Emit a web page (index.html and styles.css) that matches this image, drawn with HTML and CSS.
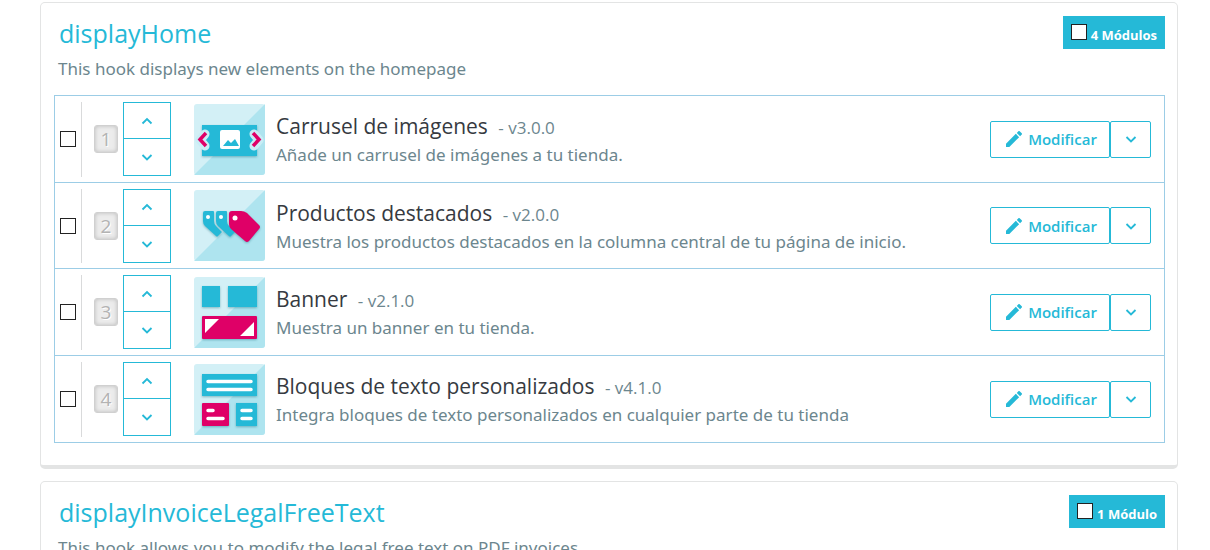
FILE: index.html
```html
<!DOCTYPE html>
<html lang="es">
<head>
<meta charset="utf-8">
<title>Posiciones de los módulos</title>
<link rel="stylesheet" href="styles.css">
</head>
<body>
<svg class="defs" aria-hidden="true">
  <symbol id="up" viewBox="0 0 12 12"><path d="M1.500 8.500 6 4l4.500 4.500" fill="none" stroke="currentColor" stroke-width="1.800"/></symbol>
  <symbol id="down" viewBox="0 0 12 12"><path d="M1.500 4 6 8.500 10.500 4" fill="none" stroke="currentColor" stroke-width="1.800"/></symbol>
  <symbol id="pencil" viewBox="3 3 18 18"><path fill="currentColor" d="M3 17.250V21h3.750L17.810 9.940l-3.750-3.750L3 17.250zM20.710 7.040a1 1 0 0 0 0-1.410l-2.340-2.340a1 1 0 0 0-1.410 0l-1.830 1.830 3.750 3.750 1.830-1.830z"/></symbol>
  <symbol id="tile" viewBox="0 0 71 71"><rect width="71" height="71" rx="3" fill="#d3f0f6"/><path d="M71 0v68a3 3 0 0 1-3 3H0z" fill="#aee4ef"/></symbol>
</svg>
<main class="page">
  <section class="panel">
    <header class="panel-head">
      <div>
        <h2 class="hook-name">displayHome</h2>
        <p class="hook-text">This hook displays new elements on the homepage</p>
      </div>
      <label class="count"><input class="check" type="checkbox"><span>4 Módulos</span></label>
    </header>
    <ul class="modules">
      <li class="module">
        <div class="select"><input class="check" type="checkbox" aria-label="Carrusel de imágenes"></div>
        <span class="position">1</span>
        <div class="sort">
          <button type="button" aria-label="Subir"><svg class="chev"><use href="#up"/></svg></button>
          <button type="button" aria-label="Bajar"><svg class="chev"><use href="#down"/></svg></button>
        </div>
        <svg class="logo" viewBox="0 0 71 71" aria-hidden="true">
          <use href="#tile"/>
          <g class="raised">
            <path d="M8 21h55v31H8z" fill="#25b9d7"/>
          </g>
          <rect x="26" y="26" width="20" height="19" rx="2" fill="#fff"/>
          <path d="m29 42 5-6 3 3 4-4 4 7z" fill="#25b9d7"/>
          <g fill="none">
            <path d="m11 30-5 6 5 6M60 30l5 6-5 6" stroke="#c9edf5" stroke-width="9" stroke-linecap="round" stroke-linejoin="round"/>
            <path d="m12 29-6 6.500 6 6.500M59 29l6 6.500-6 6.500" stroke="#df0067" stroke-width="3.500"/>
          </g>
        </svg>
        <div class="info">
          <h3 class="name">Carrusel de imágenes <small>- v3.0.0</small></h3>
          <p class="text">Añade un carrusel de imágenes a tu tienda.</p>
        </div>
        <div class="actions">
          <button class="edit" type="button"><svg class="pen"><use href="#pencil"/></svg>Modificar</button>
          <button class="more" type="button" aria-label="Más acciones"><svg class="chev"><use href="#down"/></svg></button>
        </div>
      </li>
      <li class="module">
        <div class="select"><input class="check" type="checkbox" aria-label="Productos destacados"></div>
        <span class="position">2</span>
        <div class="sort">
          <button type="button" aria-label="Subir"><svg class="chev"><use href="#up"/></svg></button>
          <button type="button" aria-label="Bajar"><svg class="chev"><use href="#down"/></svg></button>
        </div>
        <svg class="logo" viewBox="0 0 71 71" aria-hidden="true">
          <use href="#tile"/>
          <g class="raised">
            <path d="M11 21h8a1 1 0 0 1 1 1v9q0 3 2 5l6 6-4 4q-1 1-2 0L11 36q-2-2-2-5v-8q0-2 2-2z" fill="#25b9d7"/>
            <path d="M24 21h8a1 1 0 0 1 1 1v9q0 3 2 5l6 6-4 4q-1 1-2 0L24 36q-2-2-2-5v-8q0-2 2-2z" fill="#25b9d7"/>
            <path d="M38 21h9q3 0 6 2l12 12q2 2 0 4L55 51q-2 2-4 0L37 39q-2-2-2-5V24q0-3 3-3z" fill="#df0067"/>
          </g>
          <g fill="#fff"><circle cx="14" cy="27" r="2"/><circle cx="27" cy="27" r="2"/><circle cx="41" cy="28" r="2.500"/></g>
        </svg>
        <div class="info">
          <h3 class="name">Productos destacados <small>- v2.0.0</small></h3>
          <p class="text">Muestra los productos destacados en la columna central de tu página de inicio.</p>
        </div>
        <div class="actions">
          <button class="edit" type="button"><svg class="pen"><use href="#pencil"/></svg>Modificar</button>
          <button class="more" type="button" aria-label="Más acciones"><svg class="chev"><use href="#down"/></svg></button>
        </div>
      </li>
      <li class="module">
        <div class="select"><input class="check" type="checkbox" aria-label="Banner"></div>
        <span class="position">3</span>
        <div class="sort">
          <button type="button" aria-label="Subir"><svg class="chev"><use href="#up"/></svg></button>
          <button type="button" aria-label="Bajar"><svg class="chev"><use href="#down"/></svg></button>
        </div>
        <svg class="logo" viewBox="0 0 71 71" aria-hidden="true">
          <use href="#tile"/>
          <g class="raised">
            <path d="M8 9h18v21H8zM34 9h29v21H34z" fill="#25b9d7"/>
            <rect x="8" y="39" width="55" height="23" rx="1" fill="#df0067"/>
          </g>
          <path d="M11 42h14L11 56zM60 45v14H46z" fill="#fff"/>
        </svg>
        <div class="info">
          <h3 class="name">Banner <small>- v2.1.0</small></h3>
          <p class="text">Muestra un banner en tu tienda.</p>
        </div>
        <div class="actions">
          <button class="edit" type="button"><svg class="pen"><use href="#pencil"/></svg>Modificar</button>
          <button class="more" type="button" aria-label="Más acciones"><svg class="chev"><use href="#down"/></svg></button>
        </div>
      </li>
      <li class="module">
        <div class="select"><input class="check" type="checkbox" aria-label="Bloques de texto personalizados"></div>
        <span class="position">4</span>
        <div class="sort">
          <button type="button" aria-label="Subir"><svg class="chev"><use href="#up"/></svg></button>
          <button type="button" aria-label="Bajar"><svg class="chev"><use href="#down"/></svg></button>
        </div>
        <svg class="logo" viewBox="0 0 71 71" aria-hidden="true">
          <use href="#tile"/>
          <g class="raised">
            <path d="M8 10h55v22H8zM42 39h21v23H42z" fill="#25b9d7"/>
            <rect x="8" y="39" width="27" height="23" rx="1" fill="#df0067"/>
          </g>
          <path d="M14 17.500h43M14 25.500h43M14 46.500h5M14 54.500h15M48 46.500h9M48 54.500h9" stroke="#fff" stroke-width="3.500" stroke-linecap="round"/>
        </svg>
        <div class="info">
          <h3 class="name">Bloques de texto personalizados <small>- v4.1.0</small></h3>
          <p class="text">Integra bloques de texto personalizados en cualquier parte de tu tienda</p>
        </div>
        <div class="actions">
          <button class="edit" type="button"><svg class="pen"><use href="#pencil"/></svg>Modificar</button>
          <button class="more" type="button" aria-label="Más acciones"><svg class="chev"><use href="#down"/></svg></button>
        </div>
      </li>
    </ul>
  </section>
  <section class="panel">
    <header class="panel-head">
      <div>
        <h2 class="hook-name">displayInvoiceLegalFreeText</h2>
        <p class="hook-text">This hook allows you to modify the legal free text on PDF invoices</p>
      </div>
      <label class="count"><input class="check" type="checkbox"><span>1 Módulo</span></label>
    </header>
  </section>
</main>
</body>
</html>
```
FILE: styles.css
```css
* { box-sizing: border-box; }
html { overflow: hidden; }
body {
  margin: 0;
  background: #fff;
  color: #6c868e;
  font: 17px/24px "Open Sans", "Noto Sans", sans-serif;
}
h2, h3, p, ul { margin: 0; padding: 0; font-weight: 400; }
button { padding: 0; font: inherit; color: inherit; background: #fff; cursor: pointer; }
.defs { display: none; }
.page {
  display: flex;
  flex-direction: column;
  gap: 12px;
  padding: 2px 32px 12px 40px;
}
.panel {
  padding: 13px 12px 22px 13px;
  border: 1px solid #e3e4e4;
  border-bottom-width: 4px;
  border-radius: 5px;
}
.panel-head {
  display: flex;
  justify-content: space-between;
  align-items: flex-start;
  padding-bottom: 14px;
}
.hook-name { padding-left: 5px; font-size: 25px; line-height: 35px; color: #25b9d7; }
.hook-text, .text { font-family: "Noto Sans", "Open Sans", sans-serif; }
.hook-text { padding: 6px 0 0 4px; line-height: 24px; }
.count {
  display: flex;
  align-items: flex-start;
  gap: 4px;
  padding: 8px;
  height: 33px;
  background: #25b9d7;
  color: #fff;
  font-size: 13px;
  font-weight: 700;
  line-height: 22px;
}
.check {
  appearance: none;
  flex: none;
  display: block;
  width: 16px;
  height: 16px;
  margin: 0;
  border: 1px solid #222;
  background: #fff;
}
.modules {
  display: grid;
  grid-auto-rows: 1fr;
  min-height: 348px;
  border: 1px solid #9ccde6;
  list-style: none;
}
.module {
  display: flex;
  align-items: center;
  padding: 6px 13px 5px 5px;
  border-bottom: 1px solid #9ccde6;
}
.module:last-child { border-bottom: 0; }
.select {
  display: flex;
  align-items: center;
  align-self: stretch;
  width: 22px;
  border-right: 1px solid #d9dadb;
}
.position {
  width: 24px;
  margin: 0 5px 0 12px;
  border: 1px solid #d0d0d0;
  border-radius: 3px;
  background: #ececec;
  box-shadow: inset 0 0 4px #bbb;
  color: #b3b3b3;
  font-size: 19px;
  line-height: 26px;
  text-align: center;
  text-shadow: 1px 1px 0 #fff;
}
.sort { display: grid; width: 48px; margin-right: 23px; }
.sort button {
  display: grid;
  place-items: center;
  height: 37px;
  border: 1px solid #25b9d7;
  color: #25b9d7;
}
.sort button + button { height: 38px; margin-top: -1px; }
.chev { display: block; width: 12px; height: 12px; }
.logo { flex: none; width: 71px; height: 71px; }
.raised { filter: drop-shadow(0 1px 1px #0b617366); }
.info { flex: 1; padding: 2px 0 0 11px; }
.name { font-size: 21px; line-height: 28px; color: #363a41; }
.name small { margin-left: 5px; font-size: 17px; color: #6c868e; }
.text { line-height: 26px; }
.actions { display: flex; color: #25b9d7; }
.actions button { height: 37px; border: 1px solid #25b9d7; border-radius: 2px; }
.edit {
  display: flex;
  align-items: center;
  justify-content: center;
  gap: 6px;
  width: 120px;
  padding-left: 3px;
  font-size: 15px;
  font-weight: 600;
}
.more { display: grid; place-items: center; width: 41px; }
.pen { width: 16px; height: 16px; }
```
